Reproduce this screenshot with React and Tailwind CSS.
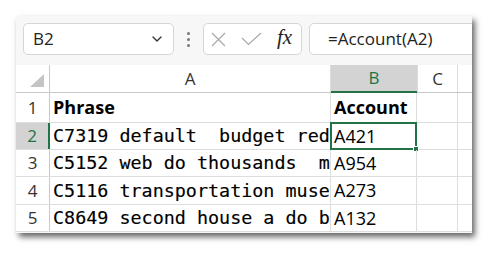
import { ChevronDown } from "lucide-react";

const sans = "font-['Open_Sans','Noto_Sans',sans-serif]";
const mono = "font-['DejaVu_Sans_Mono','Liberation_Mono',monospace]";

const rows = [
  { n: 1, a: "Phrase", b: "Account", head: true, h: "h-[30px]" },
  { n: 2, a: "C7319 default  budget red", b: "A421", h: "h-[27px]" },
  { n: 3, a: "C5152 web do thousands  mu", b: "A954", h: "h-[27px]" },
  { n: 4, a: "C5116 transportation muse", b: "A273", h: "h-[28px]" },
  { n: 5, a: "C8649 second house a do ba", b: "A132", h: "h-[27px]" },
];

export default function App() {
  return (
    <div className="w-[500px] h-[263px] bg-white pt-[16px] pl-[16px]">
      <div className="w-[456px] h-[217px] bg-[#f7f7f7] overflow-hidden shadow-[3px_4px_6px_rgba(0,0,0,0.6)]">
        {/* FORMULA BAR */}
        <div className="h-[49px] flex items-start pt-[7px] pl-[7px]">
          <div className="shrink-0 w-[151px] h-[32px] bg-white border border-[#d6d6d6] rounded-[5px] flex items-center justify-between pl-[9px] pr-[8px]">
            <span className={`${sans} text-[17px] text-[#222]`}>B2</span>
            <ChevronDown size={16} strokeWidth={2} className="text-[#333]" />
          </div>
          <div className="shrink-0 w-[29px] h-[32px] flex flex-col items-center justify-center gap-[3px]">
            <span className="w-[3px] h-[3px] rounded-full bg-[#777]" />
            <span className="w-[3px] h-[3px] rounded-full bg-[#777]" />
            <span className="w-[3px] h-[3px] rounded-full bg-[#777]" />
          </div>
          <div className="shrink-0 w-[99px] h-[32px] bg-white border border-[#d6d6d6] rounded-[5px] flex items-center pl-[7px] gap-[15px]">
            <svg width="15" height="15" viewBox="0 0 15 15">
              <path d="M1 1 L14 14 M14 1 L1 14" stroke="#a8a8a8" strokeWidth="1.2" fill="none" />
            </svg>
            <svg width="21" height="14" viewBox="0 0 21 14">
              <path d="M1 6 L7.5 12.5 L20 1" stroke="#a8a8a8" strokeWidth="1.2" fill="none" />
            </svg>
            <span className="font-['Liberation_Serif',serif] italic text-[21px] leading-none text-[#222] -mt-[3px]">
              fx
            </span>
          </div>
          <div className="shrink-0 ml-[7px] w-[200px] h-[32px] bg-white border border-[#d6d6d6] rounded-[5px] flex items-center pl-[18px]">
            <span className={`${sans} text-[17px] text-[#222]`}>=Account(A2)</span>
          </div>
        </div>

        {/* GRID */}
        <div className="bg-white">
          <div className="flex h-[28px] border-b border-[#c8c8c8]">
            <div className="shrink-0 w-[34px] border-r border-[#c8c8c8] relative">
              <div className="absolute right-[5px] bottom-[5px] w-0 h-0 border-l-[14px] border-l-transparent border-b-[13px] border-b-[#c4c4c4]" />
            </div>
            <div className={`shrink-0 w-[281px] border-r border-[#dcdcdc] flex items-center justify-center ${sans} text-[17px] text-[#333]`}>A</div>
            <div className={`shrink-0 w-[86px] bg-[#d3d3d3] border-b-2 border-[#217346] -mb-px flex items-center justify-center ${sans} text-[17px] text-[#217346]`}>B</div>
            <div className={`shrink-0 w-[41px] border-r border-l border-[#dcdcdc] flex items-center justify-center ${sans} text-[17px] text-[#333]`}>C</div>
            <div className="flex-1" />
          </div>

          {rows.map((r) => (
            <div key={r.n} className={`flex ${r.h} border-b border-[#dedede]`}>
              <div
                className={`shrink-0 w-[34px] flex items-center justify-center ${sans} text-[17px] ${
                  r.n === 2
                    ? "bg-[#d3d3d3] border-r-2 border-[#217346] text-[#217346]"
                    : "border-r border-[#c8c8c8] text-[#333]"
                }`}
              >
                {r.n}
              </div>
              <div
                className={`shrink-0 w-[281px] border-r border-[#dedede] flex items-center overflow-hidden whitespace-pre pl-[3px] ${
                  r.head
                    ? `${sans} font-bold text-[18px]`
                    : `${mono} text-[18.4px] [-webkit-text-stroke:0.15px_black]`
                } text-black`}
              >
                {r.a}
              </div>
              <div
                className={`shrink-0 w-[86px] border-r border-[#dedede] flex items-center pl-[3px] ${sans} text-black relative ${
                  r.head ? "font-bold text-[18px]" : "text-[18px]"
                }`}
              >
                {r.b}
                {r.n === 2 && (
                  <div className="absolute -left-px -top-px -right-px -bottom-px border-2 border-[#217346]">
                    <div className="absolute -right-[4px] -bottom-[4px] w-[6px] h-[6px] bg-[#217346] border border-white" />
                  </div>
                )}
              </div>
              <div className="shrink-0 w-[41px] border-r border-[#dedede]" />
              <div className="flex-1" />
            </div>
          ))}
        </div>
      </div>
    </div>
  );
}
